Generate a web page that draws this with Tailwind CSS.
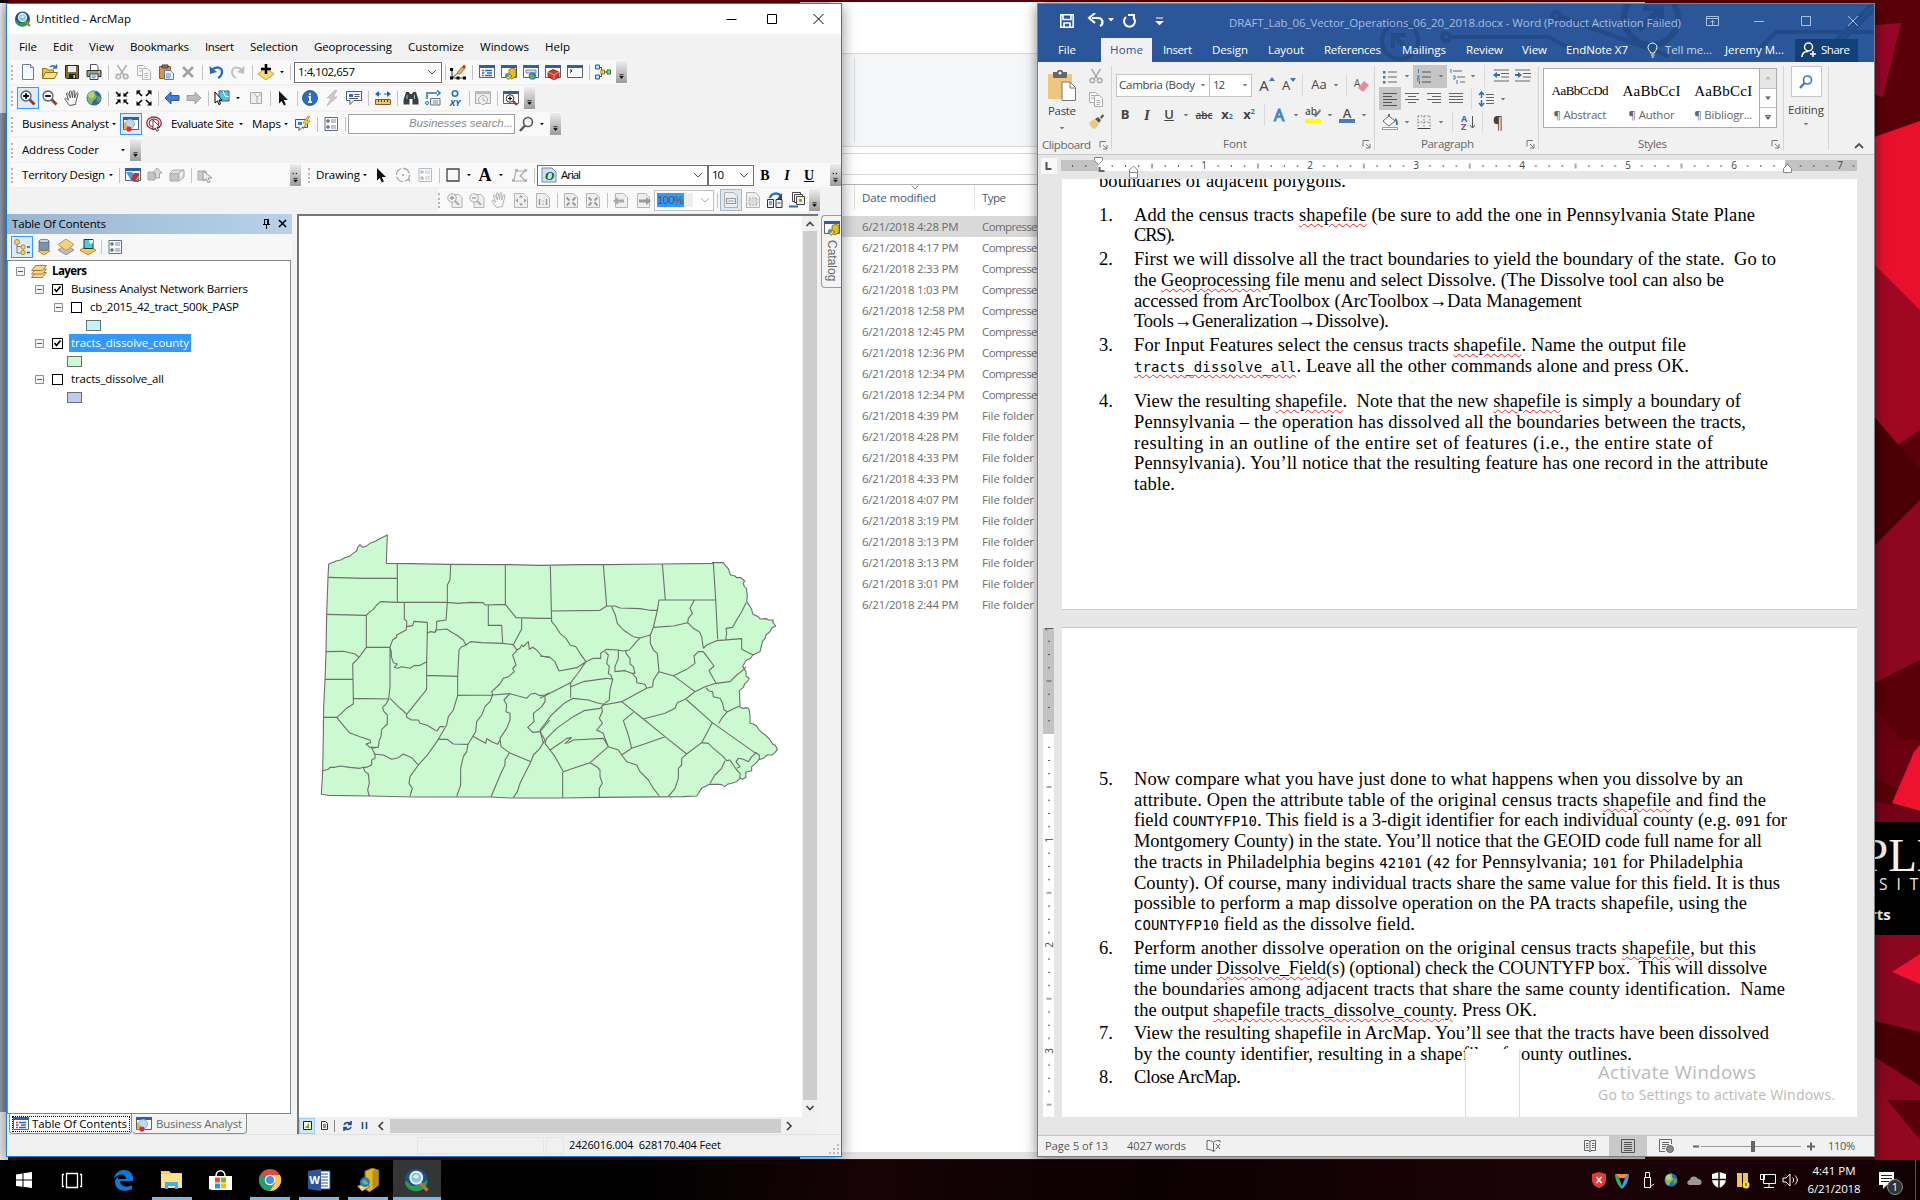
<!DOCTYPE html>
<html lang="en">
<head>
<meta charset="utf-8">
<title>Desktop</title>
<script src="https://cdn.jsdelivr.net/npm/@tailwindcss/browser@4"></script>
</head>
<body class="w-[1920px] h-[1200px] overflow-hidden relative bg-[#5c0008] font-['Open_Sans',sans-serif] text-[11.500px] text-black">

<svg class="hidden">
<defs>
<symbol id="car" viewBox="0 0 16 16"><path d="M5 6.500h6l-3 3.500z" fill="currentColor"/></symbol>
<symbol id="new" viewBox="0 0 16 16"><path d="M2.500.5h8l3 3v12h-11z" fill="#f4f9ff" stroke="#6c7f97"/><path d="M10.500.500v3h3" fill="#cfe0f2" stroke="#6c7f97"/></symbol>
<symbol id="open" viewBox="0 0 16 16"><path d="M.5 14.500v-10h4l1 1.500h6v8.500z" fill="#e6c24e" stroke="#947319"/><path d="M.5 14.500l3-6h12l-3 6z" fill="#ffe48d" stroke="#947319"/><path d="M8 3c2-2 4-1.500 5.500 0M14.500.5v3.500h-3.500" fill="none" stroke="#2c70b4" stroke-width="1.500"/></symbol>
<symbol id="save" viewBox="0 0 16 16"><path d="M1.500 1.500h13v13h-12l-1-1z" fill="#7d6e2e" stroke="#2c2a1a"/><path d="M4 2h8v6H4z" fill="#e9eef5"/><path d="M5 10h7v5H5z" fill="#222"/><path d="M9.500 11h1.500v3H9.500z" fill="#ddd"/></symbol>
<symbol id="print" viewBox="0 0 16 16"><path d="M4.500 6V.5h6l1.500 2V6" fill="#fff" stroke="#555"/><path d="M1 6.500h14v6H1z" fill="#9b9b8c" stroke="#333"/><path d="M4 10h8v5.500H4z" fill="#fff" stroke="#444"/><path d="M5.500 12h5M5.500 13.800h4" stroke="#3d7fc0"/><path d="M12 8h2" stroke="#e8e45a"/></symbol>
<symbol id="cut" viewBox="0 0 16 16"><g fill="none" stroke="currentColor" stroke-width="1.500"><path d="M3.500 1l6 9.500M12.500 1l-6 9.500"/><circle cx="4.300" cy="12.500" r="2.300"/><circle cx="11.700" cy="12.500" r="2.300"/></g></symbol>
<symbol id="copy" viewBox="0 0 16 16"><g fill="#fafafa" stroke="currentColor"><path d="M1.500 1.500h6l2 2v8h-8z"/><path d="M6.500 4.500h5l3 3v8h-8z"/><path d="M3 4.500h3M3 7h3M8.500 9.500h4M8.500 11.500h4M8.500 13.500h3"/></g></symbol>
<symbol id="paste" viewBox="0 0 16 16"><path d="M1.500 2.500h11v12h-11z" fill="#e0913c" stroke="#9c5d1b"/><path d="M4 1h6v3H4z" fill="#777" stroke="#444"/><path d="M6.500 6.500h6l3 3v6h-9z" fill="#eaf3fd" stroke="#5a7da8"/><path d="M8 10h5M8 12h5M8 13.800h4" stroke="#5f8fc8"/></symbol>
<symbol id="del" viewBox="0 0 16 16"><path d="M3 3l10 10M13 3L3 13" stroke="#a2a2a2" stroke-width="2.600"/></symbol>
<symbol id="undo" viewBox="0 0 16 16"><path d="M4 6c4-4 10-3 10 2 0 3-2 5-4 6" fill="none" stroke="currentColor" stroke-width="2.300"/><path d="M1.500 2l.5 8 7-2z" fill="currentColor"/></symbol>
<symbol id="redo" viewBox="0 0 16 16"><path d="M12 6C8 2 2 3 2 8c0 3 2 5 4 6" fill="none" stroke="currentColor" stroke-width="1.800"/><path d="M14.500 2l-.5 8-7-2z" fill="currentColor"/></symbol>
<symbol id="add" viewBox="0 0 16 16"><path d="M8 4l8 6-8 6-8-6z" fill="#ffd87a" stroke="#d9962e"/><path d="M8 0v10M3 5h10" stroke="#000" stroke-width="2.600"/></symbol>
<symbol id="edit" viewBox="0 0 16 16"><path d="M2 5v9h12M2 14l6-5" fill="none" stroke="#333"/><path d="M0 12.500h3v3H0zM6.500 12.500h3v3h-3zM13 12.500h3v3h-3zM0 4h3v3H0z"/><path d="M7 9l5-6 2.500 2-5 5.500z" fill="#f0b64d" stroke="#6b5a38" stroke-width=".7"/><path d="M12 3l2-2.500 2 2L14.500 5z" fill="#c0392b"/></symbol>
<symbol id="wbase" viewBox="0 0 16 16"><path d="M.5 1.500h15v12H.5z" fill="#fdfdfd" stroke="#5c6069"/><path d="M0 1h16v3H0z" fill="#2f5fa8"/></symbol>
<symbol id="wtoc" viewBox="0 0 16 16"><use href="#wbase"/><path d="M3 6.500h2M3 11.500h2" stroke="#e33" stroke-width="1.500"/><path d="M6 6.500h7M8 9h5M6 11.500h7M3 9h2.500" stroke="#2c62c8" stroke-width="1.300"/></symbol>
<symbol id="wcat" viewBox="0 0 16 16"><use href="#wbase"/><path d="M8 6l3-2 4 1.500v7L11 15l-3-2z" fill="#e8bd20" stroke="#7c6206" stroke-width=".8"/><path d="M4 12l4-2 3 2-4 3.500z" fill="#f3d34a" stroke="#7c6206" stroke-width=".8"/><circle cx="6" cy="11" r="2" fill="#3aa0a8"/></symbol>
<symbol id="wsearch" viewBox="0 0 16 16"><use href="#wbase"/><path d="M3 6h10v3H3z" fill="#d9dee5" stroke="#888"/><circle cx="9.500" cy="12" r="3.800" fill="#2b84c6"/><path d="M7 11c2-2 3 0 4 1s-1 3-2 3-2-2-2-4z" fill="#63b44c"/></symbol>
<symbol id="wtool" viewBox="0 0 16 16"><use href="#wbase"/><path d="M3 8l5-2.500 6 2.500v5l-5 3-6-3.500z" fill="#cf3a2c" stroke="#7a1a12" stroke-width=".8"/><path d="M3 8l6 3 5-3M9 11v4.500" fill="none" stroke="#f3b0a6" stroke-width=".8"/></symbol>
<symbol id="wcmd" viewBox="0 0 16 16"><use href="#wbase"/><path d="M3 5.500l2 1.500-2 1.500" fill="none" stroke="#000"/></symbol>
<symbol id="model" viewBox="0 0 16 16"><path d="M4 3.500h2.500v9H4M7 8h6" fill="none" stroke="#444"/><path d="M.5 1h4v4h-4zM.5 11h4v4h-4z" fill="#bfe0ff" stroke="#1d5fa8"/><path d="M6 6h3.500v4H6z" fill="#f6dc53" stroke="#8a7206"/><path d="M12 6h3.500v4H12z" fill="#9adf8e" stroke="#1e7a1e"/></symbol>
<symbol id="zin" viewBox="0 0 16 16"><path d="M9.500 9.500l5 5" stroke="#8a3b2c" stroke-width="2.800"/><circle cx="6" cy="6" r="5" fill="#eef3f8" stroke="#5a6068" stroke-width="1.300"/><path d="M6 3.200v5.600M3.200 6h5.600" stroke="#000" stroke-width="1.800"/></symbol>
<symbol id="zout" viewBox="0 0 16 16"><path d="M9.500 9.500l5 5" stroke="#8a3b2c" stroke-width="2.800"/><circle cx="6" cy="6" r="5" fill="#eef3f8" stroke="#5a6068" stroke-width="1.300"/><path d="M3.200 6h5.600" stroke="#000" stroke-width="1.800"/></symbol>
<symbol id="hand" viewBox="0 0 16 16"><path d="M5.500 15.500L1 9.500c-.5-1.500 1-1.500 2-.5L4.500 10 2.500 4c0-1.500 1.500-1.500 2 0l2 4-1-6c0-1.500 1.700-1.500 2 0l1 5.500.5-6c.2-1.300 1.700-1.200 1.800 0l-.2 6.500 1.700-4.500c.6-1.200 1.900-.7 1.700.5l-2 7.500-.5 3z" fill="#fff" stroke="#555"/></symbol>
<symbol id="globe" viewBox="0 0 16 16"><circle cx="8" cy="8" r="7.500" fill="#2c68b8"/><path d="M2 4c2-3 6-4 7-3s-1 3 1 4 0 4-2 5-1 4-3 4-5-6-3-10z" fill="#8bbb4d"/><path d="M11 6c2 0 4 1 4 3s-3 4-4 3 0-3 0-6z" fill="#6d9d3a"/><circle cx="5.500" cy="5" r="3" fill="#fff" opacity=".35"/></symbol>
<symbol id="fin" viewBox="0 0 16 16"><path d="M2 2l4 4M14 2l-4 4M2 14l4-4M14 14l-4-4" stroke="currentColor" stroke-width="1.600"/><path d="M6.500 2.500v4h-4zM9.500 2.500v4h4zM6.500 13.500v-4h-4zM9.500 13.500v-4h4z" fill="currentColor"/></symbol>
<symbol id="fout" viewBox="0 0 16 16"><path d="M2 2l4 4M14 2l-4 4M2 14l4-4M14 14l-4-4" stroke="currentColor" stroke-width="1.600"/><path d="M.5.500H5L.5 5zM15.500.500H11L15.500 5zM.5 15.500H5L.5 11zM15.500 15.500H11l4.500-4.500z" fill="currentColor"/></symbol>
<symbol id="back" viewBox="0 0 16 16"><path d="M1 8l6-6v3.500h8v5H7V14z" fill="#3f7ede" stroke="#2459ad"/></symbol>
<symbol id="fwd" viewBox="0 0 16 16"><path d="M15 8L9 2v3.500H1v5h8V14z" fill="#bcbcbc" stroke="#a0a0a0"/></symbol>
<symbol id="sel" viewBox="0 0 16 16"><path d="M5 1h10v10H5z" fill="#4cc6e6" stroke="#555"/><path d="M9 1l2 5 4 1" fill="none" stroke="#fff"/><path d="M1 2l7 8H5l1.500 4-1.700.5L3.500 11 1 13z" fill="#fff" stroke="#000"/></symbol>
<symbol id="clr" viewBox="0 0 16 16"><path d="M2.500 2.500h11v11h-11zM6 3l3 4 4-3M9 7v6" fill="#eee" stroke="#aaa"/></symbol>
<symbol id="arrow" viewBox="0 0 16 16"><path d="M4 1l9 9H8.700l2.200 4.500-2 1L6.700 11 4 13.500z" fill="#111"/></symbol>
<symbol id="info" viewBox="0 0 16 16"><circle cx="8" cy="8" r="7.500" fill="#2a6cc6" stroke="#1a4c98" stroke-width=".8"/><path d="M8 3.200v2M6.500 7H8v5M6 12.200h4" stroke="#fff" stroke-width="1.800" fill="none"/></symbol>
<symbol id="bolt" viewBox="0 0 16 16"><path d="M11 0L3 8h4l-4 8 10-9H9l4-7z" fill="#ccc" stroke="#aaa" stroke-width=".6"/></symbol>
<symbol id="pop" viewBox="0 0 16 16"><path d="M.5 1.500h15v9H8l-4 4v-4H.5z" fill="#f4f6f9" stroke="#555"/><path d="M3 4h4v3H3z" fill="#2c6fbf"/><path d="M8.500 4.500h5M8.500 6.500h5M3 8.500h9" stroke="#555"/></symbol>
<symbol id="meas" viewBox="0 0 16 16"><path d="M.5 9.500h15v5H.5z" fill="#f3c36b" stroke="#8b5e18"/><path d="M3.500 10v2M6.500 10v2M9.500 10v2M12.500 10v2" stroke="#5d3d0c"/><path d="M1 4h14" stroke="#1b66b5" stroke-dasharray="5 3"/><path d="M0 4l4-3v6zM16 4l-4-3v6z" fill="#1b66b5"/></symbol>
<symbol id="bino" viewBox="0 0 16 16"><path d="M3 2h3l1 2h2l1-2h3l2.500 8v4.500h-6V9h-3v5.500h-6V10z" fill="#3a3f45"/><path d="M4 5v4M11.500 5v4" stroke="#b8bec6"/></symbol>
<symbol id="path" viewBox="0 0 16 16"><path d="M2 9V3h10M12 .5L15 3l-3 2.500" fill="none" stroke="#2074b8" stroke-width="1.500"/><circle cx="2" cy="13" r="1.500" fill="none" stroke="#2074b8"/><path d="M5.500 8.500h9.500v6.500H5.500z" fill="#e8eef4" stroke="#6b7682"/><path d="M8 11h5M8 13h5" stroke="#8895a3"/></symbol>
<symbol id="xy" viewBox="0 0 16 16"><circle cx="8" cy="3.500" r="2.700" fill="none" stroke="#2074b8" stroke-width="1.600"/><text x="8" y="15.500" text-anchor="middle" font-size="9" font-weight="700" fill="#1d5f9c" font-family="Open Sans">XY</text></symbol>
<symbol id="time" viewBox="0 0 16 16"><path d="M.5 1.500h15v12H.5z" fill="#ececec" stroke="#aaa"/><path d="M0 1h16v3H0z" fill="#bbb"/><circle cx="8" cy="10" r="4.500" fill="#f5f5f5" stroke="#aaa"/><path d="M8 7v3.500h2.500" fill="none" stroke="#aaa"/></symbol>
<symbol id="mag" viewBox="0 0 16 16"><use href="#wbase"/><path d="M9 10l5 5" stroke="#8a3b2c" stroke-width="2.200"/><circle cx="7" cy="8.500" r="3.800" fill="#f6f6f6" stroke="#333"/><path d="M7 6.500v4M5 8.500h4" stroke="#000" stroke-width="1.200"/></symbol>
<symbol id="ba" viewBox="0 0 16 16"><use href="#wbase"/><circle cx="7" cy="8" r="4.500" fill="#bcdcf5" stroke="#7fb2dc"/><path d="M1 6l7 7-4 2-3-3z" fill="#f0a93e"/><circle cx="6" cy="13" r="2.600" fill="#cf2a5a"/></symbol>
<symbol id="ring" viewBox="0 0 16 16"><g fill="none" stroke="#a5304a"><ellipse cx="8" cy="7" rx="7.300" ry="6" stroke-width="1.400"/><ellipse cx="8" cy="7" rx="4.800" ry="3.800" stroke-width="1.200"/></g><path d="M7 4l7 7h-3l1.500 3.500-1.700.7L9.300 12 7 14z" fill="#fff" stroke="#222" stroke-width=".8"/></symbol>
<symbol id="mnote" viewBox="0 0 16 16"><path d="M.5 3.500h12v8H7l-3 3v-3H.5z" fill="#e9f2fb" stroke="#555"/><path d="M3 6h4v3H3z" fill="#2c86c9"/><path d="M13 0L8 7h3l-3 6 7-8h-3l3-5z" fill="#f5d540" stroke="#8b7310" stroke-width=".6"/></symbol>
<symbol id="opt" viewBox="0 0 16 16"><path d="M2 1.500h12.500v13H2z" fill="#fbfcfe" stroke="#5c6f8d"/><circle cx="5" cy="5" r="1.200" fill="none" stroke="#333"/><circle cx="5" cy="11" r="1.200" fill="none" stroke="#333"/><path d="M8 4h5M8 6h5M8 10h5M8 12h5" stroke="#88a"/></symbol>
<symbol id="lens" viewBox="0 0 16 16"><circle cx="10" cy="6" r="4.500" fill="none" stroke="#555" stroke-width="1.600"/><path d="M7 9.500L2 15" stroke="#555" stroke-width="2.400"/></symbol>
<symbol id="terr" viewBox="0 0 16 16"><use href="#wbase"/><path d="M1 5h6l3 4-3 6z" fill="#4a9ad8"/><path d="M9 6h5v3l-5 6-3-3z" fill="#b73247"/><path d="M9 15h5v-5z" fill="#4b8a3a"/></symbol>
<symbol id="gbox" viewBox="0 0 16 16"><path d="M1 5h7v8H1z" fill="#c4c4c4" stroke="#aaa"/><path d="M6 6l4-5 5 5h-2.500v5h-4V6z" fill="#d8d8d8" stroke="#a5a5a5"/></symbol>
<symbol id="gbox2" viewBox="0 0 16 16"><path d="M1 6h9v8H1z" fill="#c4c4c4" stroke="#aaa"/><path d="M1 6l3-3h11l-5 3M10 14l5-4V3" fill="#dedede" stroke="#aaa"/></symbol>
<symbol id="gsel" viewBox="0 0 16 16"><path d="M1 4h8v9H1z" fill="#ccc" stroke="#aaa"/><path d="M6 4l9 7h-4l2 4-2 .8-2-4L6 14z" fill="#eee" stroke="#999"/></symbol>
<symbol id="rot" viewBox="0 0 16 16"><circle cx="8" cy="8" r="6.500" fill="none" stroke="#aaa" stroke-width="1.300" stroke-dasharray="8 2"/><circle cx="8" cy="8" r="1" fill="#999"/><path d="M12 12h3v3z" fill="#aaa"/></symbol>
<symbol id="rect" viewBox="0 0 16 16"><path d="M2 2h12v12H2z" fill="#f7f7fb" stroke="#444" stroke-width="1.300"/></symbol>
<symbol id="poly" viewBox="0 0 16 16"><path d="M2 14l2-10h9l-5 5 6 5z" fill="none" stroke="#aaa" stroke-width="1.200"/><path d="M0 12h3v3H0zM3 2h3v3H3zM12 2h3v3h-3zM12 12h3v3h-3z" fill="#b5b5b5"/></symbol>
<symbol id="page" viewBox="0 0 16 16"><path d="M5 2.500h7l3 3v10H5z" fill="#eee" stroke="#b5b5b5"/></symbol>
<symbol id="pzin" viewBox="0 0 16 16"><use href="#page"/><path d="M8 9l4 4" stroke="#aaa" stroke-width="2"/><circle cx="5" cy="6" r="4.200" fill="#f2f2f2" stroke="#aaa"/><path d="M5 4v4M3 6h4" stroke="#999" stroke-width="1.300"/></symbol>
<symbol id="pzout" viewBox="0 0 16 16"><use href="#page"/><path d="M8 9l4 4" stroke="#aaa" stroke-width="2"/><circle cx="5" cy="6" r="4.200" fill="#f2f2f2" stroke="#aaa"/><path d="M3 6h4" stroke="#999" stroke-width="1.300"/></symbol>
<symbol id="pfull" viewBox="0 0 16 16"><path d="M1.500 1.500h9l4 4v10h-13z" fill="#eee" stroke="#b5b5b5"/><path d="M8 3l2 2.500H6zM8 14l2-2.500H6zM2.500 8.500L5 6.500v4zM13.500 8.500L11 6.500v4z" fill="#999"/></symbol>
<symbol id="p11" viewBox="0 0 16 16"><path d="M1.500 1.500h9l4 4v10h-13z" fill="#eee" stroke="#b5b5b5"/><path d="M4.500 7v6M11.500 7v6M8 8.500v1M8 11.500v1" stroke="#999" stroke-width="1.400"/></symbol>
<symbol id="pgrid" viewBox="0 0 16 16"><path d="M1.500 1.500h9l4 4v10h-13z" fill="#eee" stroke="#b5b5b5"/><path d="M3.500 5.500l3 3M12.500 5.500l-3 3M3.500 13.500l3-3M12.500 13.500l-3-3" stroke="#999" stroke-width="1.800"/></symbol>
<symbol id="pback" viewBox="0 0 16 16"><path d="M2.500 1.500h8l4 4v10h-12z" fill="#eee" stroke="#b5b5b5"/><path d="M0 9l5-4v2.500h6v3H5V13z" fill="#aaa"/></symbol>
<symbol id="pfwd" viewBox="0 0 16 16"><path d="M2.500 1.500h8l4 4v10h-12z" fill="#eee" stroke="#b5b5b5"/><path d="M16 9l-5-4v2.500H4v3h7V13z" fill="#999"/></symbol>
<symbol id="pdraft" viewBox="0 0 16 16"><path d="M1.500.5h9l4 4v11h-13z" fill="#eaeef2" stroke="#b0b0b0"/><path d="M3.500 6.500h9v5h-9zM5.500 9h5" fill="none" stroke="#999" stroke-width="1.200"/></symbol>
<symbol id="pdash" viewBox="0 0 16 16"><path d="M1.500.5h9l4 4v11h-13z" fill="#eee" stroke="#b5b5b5"/><path d="M4 6h8v7H4z" fill="#ddd" stroke="#999" stroke-dasharray="1.500 1.500"/></symbol>
<symbol id="pswap" viewBox="0 0 16 16"><path d="M3 6c1-5 8-6 11-2" fill="none" stroke="#2a6fb0" stroke-width="2.400"/><path d="M15 1v6h-5z" fill="#1d4f87"/><path d="M.5 7.500h6v8h-6zM9 7.500h6v8H9z" fill="#e9eef4" stroke="#333"/><path d="M2 10h3M2 12h3M10.500 11h3" stroke="#555"/></symbol>
<symbol id="pdd" viewBox="0 0 16 16"><path d="M3.500.5h8v9h-8z" fill="#fff" stroke="#444"/><path d="M5.500 2.500h8v8h-8z" fill="#fff" stroke="#444"/><path d="M7.500 4.500h8v8h-8z" fill="#f4f8e8" stroke="#444"/><path d="M10 7h3v3h-3z" fill="#7ba84a"/><path d="M0 13.500h9v2H0z" fill="#2f6fb5"/></symbol>
<symbol id="tlist" viewBox="0 0 16 16"><path d="M3 5v9h5M3 7.500h5" fill="none" stroke="#777"/><circle cx="3" cy="3" r="2.500" fill="#f4cf7e" stroke="#b98b2c"/><circle cx="9" cy="8" r="2.200" fill="#f4cf7e" stroke="#b98b2c"/><circle cx="9" cy="13.500" r="2.200" fill="#f4cf7e" stroke="#b98b2c"/><path d="M13 8h3M13 13.500h3" stroke="#2a5fa0" stroke-width="1.500"/></symbol>
<symbol id="tsrc" viewBox="0 0 16 16"><path d="M8 8l6 4-6 4-6-4z" fill="#f4c559" stroke="#c08a24"/><path d="M3 2v8c0 2 10 2 10 0V2z" fill="#7c92b4" stroke="#4a5a74" stroke-width=".7"/><ellipse cx="8" cy="2" rx="5" ry="1.700" fill="#c8d4e6" stroke="#4a5a74" stroke-width=".7"/></symbol>
<symbol id="tvis" viewBox="0 0 16 16"><path d="M8 5.500l8 5.500-8 5-8-5z" fill="#bdbdbd" stroke="#777" stroke-width=".7"/><path d="M8 0l8 5.500-8 6-8-6z" fill="#f7cf78" stroke="#b98b2c" stroke-width=".8"/></symbol>
<symbol id="tsel" viewBox="0 0 16 16"><path d="M8 6l8 5-8 5-8-5z" fill="#f4c559" stroke="#c08a24"/><path d="M4 .5h9v9H4z" fill="#3fd0ea" stroke="#333"/><path d="M9 1l1 4 3-1V1z" fill="#fff"/></symbol>
<symbol id="layers" viewBox="0 0 16 16"><g fill="#f6d68c" stroke="#9c7433" stroke-width=".9"><path d="M.5 14.500l4-5h11l-4 5z"/><path d="M.5 11l4-5h11l-4 5z"/><path d="M.5 7.500l4-5h11l-4 5z"/></g></symbol>
<symbol id="minus" viewBox="0 0 9 9"><path d="M.5.500h8v8h-8z" fill="#f4f4f4" stroke="#8e8e8e"/><path d="M2 4.500h5" stroke="#3a5b9c"/></symbol>
<symbol id="arcmap" viewBox="0 0 16 16"><circle cx="7.500" cy="8" r="7.500" fill="#1d4f8c"/><path d="M0 9c2-1 3 3 5 3s6-1 10-4c0 6-5 7.500-8 7.500S0 13 0 9z" fill="#2f9a4c"/><path d="M10 10l5 5" stroke="#b5753a" stroke-width="2.200"/><circle cx="7.500" cy="6.500" r="4" fill="#8cc4e4" stroke="#e8f3f8" stroke-width="1.300"/><path d="M5.500 6c1-2 3-2 3.500-.5s-2 2.500-3.500.5z" fill="#dff1f8"/></symbol>
<symbol id="arccat" viewBox="0 0 16 16"><path d="M6 2l5-2 4 1.500v10L9 16l-3-2z" fill="#e5b822" stroke="#80650d" stroke-width=".6"/><path d="M11 1.500v12l4-2v-10z" fill="#b8900f"/><path d="M1 12l6-2 2 2.500-5 3z" fill="#f7dc5c" stroke="#80650d" stroke-width=".6"/><circle cx="6" cy="9.500" r="3.300" fill="#2a7fc0"/><path d="M4 9c2-2 3 0 4 1s-3 2-4-1z" fill="#6cc05a"/></symbol>
<symbol id="launch" viewBox="0 0 16 16"><path d="M5 10.500V4.500h6M8 8l3.500 3.500M12 8v4H8" fill="none" stroke="#777"/></symbol>
<symbol id="cap" viewBox="0 0 16 16"><path d="M5 7.500h6M5.500 10h5L8 13z" fill="#000" stroke="#000"/></symbol>
<symbol id="cap2" viewBox="0 0 16 16"><path d="M4 0l2 1.500L4 3zM8.500 0l2 1.500-2 1.500z"/><path d="M5 8.500h6M5.500 11h5L8 14z" fill="#000" stroke="#000"/></symbol>
</defs>
</svg>

<!-- wallpaper -->
<svg class="absolute left-[1860px] top-0" width="60" height="1200" viewBox="1860 0 60 1200">
<rect x="1860" width="60" height="1200" fill="#5a0008"/>
<path d="M1875 25L1901 23 1883 97 1875 95z" fill="#970628"/>
<path d="M1860 142L1920 121V360L1860 300z" fill="#e8112d"/>
<path d="M1860 250L1920 310V430L1860 470z" fill="#a00822"/>
<path d="M1860 400L1920 470V560L1860 600z" fill="#4a0006"/>
<path d="M1860 560L1920 500V660L1860 690z" fill="#8e0720"/>
<path d="M1860 690L1900 740H1920V800L1860 770z" fill="#6a0010"/>
<path d="M1914 752L1892 803 1920 811V745z" fill="#ee1230"/>
<path d="M1875 801L1920 812V822H1875z" fill="#750019"/>
<path d="M1875 935H1920V1100H1875z" fill="#8b0720"/>
<path d="M1892 972L1920 954V984z" fill="#ef1232"/>
<path d="M1875 1021L1920 1032V1086L1875 1057z" fill="#470003"/>
<path d="M1875 1085L1920 1140V1160H1875z" fill="#93081f"/>
<rect x="1875" y="822" width="45" height="113" fill="#000"/>
<g fill="#f2f2f2"><text x="1862" y="871" font-family="Liberation Serif" font-size="47">PLE</text><text x="1879" y="890" font-size="15.500" font-family="Open Sans" letter-spacing="9">SIT</text><text x="1870" y="920" font-size="15" font-weight="700" font-family="Open Sans">rts</text></g>
</svg>

<!-- windows peeking out on the left -->
<div class="absolute left-0 top-0 w-2 h-[1160px] bg-[#e9e9e9]">
<div class="h-[3px] bg-black"></div><div class="h-[110px] bg-gradient-to-r from-[#f0f0f0] to-[#cfcfcf]"></div><div class="h-[999px] bg-gradient-to-r from-[#9aa0b0] to-[#71768a]"></div>
</div>

<!-- file explorer -->
<section class="absolute left-[800px] top-[2px] w-[845px] h-[1157px] bg-[#e3e3e3]"></section>
<section class="absolute left-[830px] top-[2px] w-[215px] h-[1150px] bg-white overflow-hidden flex flex-col pl-[11px] text-[#6d6d6d]">
<div class="h-[52px] border-b border-[#dadbdc]"></div>
<div class="h-[93px] bg-[#f5f6f7] border-b border-[#dadbdc]"><div class="w-[14px] h-[86px] mt-[3px] border-r border-[#dcdcdc]"></div></div>
<div class="h-[7px] border-b border-[#dadada]"></div>
<div class="h-[21px] border-b border-[#dadada]"></div>
<div class="h-[10px] border-b border-[#b5b5b5]"></div>
<div class="h-[25px] flex items-center text-[#44567a] relative"><svg class="absolute left-[70px] top-0" width="8" height="5"><path d="M.5.500L4 4 7.500.500" fill="none" stroke="#888"/></svg>
<div class="w-[14px] h-full border-r border-[#e0e0e0]"></div><div class="w-[120px] h-full pl-[7px] flex items-center border-r border-[#e0e0e0]"><span data-w="74">Date modified</span></div><span class="pl-[7px]" ><span data-w="24">Type</span></span></div>
<div id="files" class="mt-[6px] flex flex-col"></div>
</section>

<!-- ArcMap -->
<main class="absolute left-[6px] top-[3px] w-[836px] h-[1154px] border border-[#1b80d2] bg-[#f2f2f2] shadow-[0_2px_14px_rgba(0,0,0,.45)] flex flex-col">
<header class="h-[30px] bg-white flex items-center pl-2 pr-[17px]">
<svg class="size-4"><use href="#arcmap"/></svg><span class="ml-[5px]" ><span data-w="95">Untitled - ArcMap</span></span>
<svg class="ml-auto" width="98" height="12" fill="none" stroke="#000"><path d="M.500 6.500h10M41.500 1.500h9v9h-9zM87.500 1l10 10M97.500 1l-10 10"/></svg>
</header>
<nav class="h-[26px] flex items-center gap-4 pl-3">
<span data-w="18">File</span><span data-w="20">Edit</span><span data-w="25">View</span><span data-w="59">Bookmarks</span><span data-w="29">Insert</span><span data-w="48">Selection</span><span data-w="78">Geoprocessing</span><span data-w="56">Customize</span><span data-w="49">Windows</span><span data-w="25">Help</span>
</nav>

<div class="h-[154px] pl-[4px] [&_svg]:size-4 [&_.c]:w-[22px] [&_.c]:h-[22px] [&_.c]:flex [&_.c]:items-center [&_.c]:justify-center [&_.c]:shrink-0 [&_.s]:w-[6px] [&_.s]:h-[15px] [&_.s]:bg-[linear-gradient(#c4c4c4,#c4c4c4)] [&_.s]:bg-[length:1px_100%] [&_.s]:bg-center [&_.s]:bg-no-repeat [&_.s]:shrink-0 [&_.g]:w-[6px] [&_.g]:h-[15px] [&_.g]:border-l-2 [&_.g]:border-dotted [&_.g]:border-[#b5b5b5] [&_.g]:shrink-0 [&_.k]:w-[10px] [&_.k]:flex [&_.k]:justify-center [&_.k]:shrink-0 [&_.e]:w-[11px] [&_.e]:h-[22px] [&_.e]:bg-gradient-to-b [&_.e]:from-[#eee] [&_.e]:to-[#9c9c9c] [&_.e]:flex [&_.e]:items-end [&_.e]:justify-center [&_.e]:shrink-0 [&_.t]:h-[26px] [&_.t]:flex [&_.t]:items-center">
<div class="t -mt-px"><div class="flex items-center bg-[#f9f9f9] h-[24px]">
<i class="g"></i><i class="c"><svg><use href="#new"/></svg></i><i class="c"><svg><use href="#open"/></svg></i><i class="c"><svg><use href="#save"/></svg></i><i class="c"><svg><use href="#print"/></svg></i><i class="s"></i>
<i class="c text-[#b0b0b0]"><svg><use href="#cut"/></svg></i><i class="c text-[#b5b5b5]"><svg><use href="#copy"/></svg></i><i class="c"><svg><use href="#paste"/></svg></i><i class="c"><svg><use href="#del"/></svg></i><i class="s"></i>
<i class="c text-[#2d6cb0]"><svg><use href="#undo"/></svg></i><i class="c text-[#c0c0c0]"><svg><use href="#redo"/></svg></i><i class="s"></i><i class="c"><svg><use href="#add"/></svg></i><i class="k"><svg><use href="#car"/></svg></i><i class="s"></i>
<div class="ml-px w-[148px] h-[21px] bg-white border border-[#707070] flex items-center justify-between pl-[3px]"><span data-w="57">1:4,102,657</span><svg class="mr-px"><path d="M4 6l4 4 4-4" fill="none" stroke="#555"/></svg></div>
<i class="s"></i><i class="c -ml-px"><svg><use href="#edit"/></svg></i><i class="s"></i><i class="c ml-px"><svg><use href="#wtoc"/></svg></i><i class="c"><svg><use href="#wcat"/></svg></i><i class="c"><svg><use href="#wsearch"/></svg></i><i class="c"><svg><use href="#wtool"/></svg></i><i class="c"><svg><use href="#wcmd"/></svg></i><i class="s"></i><i class="c"><svg><use href="#model"/></svg></i><i class="e ml-[2px]"><svg><use href="#cap"/></svg></i>
</div></div>
<div class="t"><div class="flex items-center bg-[#f9f9f9] h-[24px]">
<i class="g"></i><i class="c border border-[#3399ff] bg-[#dcebfa]"><svg><use href="#zin"/></svg></i><i class="c"><svg><use href="#zout"/></svg></i><i class="c"><svg><use href="#hand"/></svg></i><i class="c"><svg><use href="#globe"/></svg></i><i class="s"></i>
<i class="c"><svg><use href="#fin"/></svg></i><i class="c"><svg><use href="#fout"/></svg></i><i class="s"></i><i class="c"><svg><use href="#back"/></svg></i><i class="c"><svg><use href="#fwd"/></svg></i><i class="s"></i><i class="c"><svg><use href="#sel"/></svg></i><i class="k"><svg><use href="#car"/></svg></i><i class="c ml-[2px]"><svg><use href="#clr"/></svg></i><i class="s"></i>
<i class="c -ml-px"><svg><use href="#arrow"/></svg></i><i class="s"></i><i class="c -ml-px"><svg><use href="#info"/></svg></i><i class="c"><svg><use href="#bolt"/></svg></i><i class="c"><svg><use href="#pop"/></svg></i><i class="s"></i><i class="c ml-px"><svg><use href="#meas"/></svg></i><i class="s"></i><i class="c"><svg><use href="#bino"/></svg></i><i class="c"><svg><use href="#path"/></svg></i><i class="c"><svg><use href="#xy"/></svg></i><i class="s"></i><i class="c"><svg><use href="#time"/></svg></i><i class="s"></i><i class="c"><svg><use href="#mag"/></svg></i><i class="e ml-[2px]"><svg><use href="#cap"/></svg></i>
</div></div>
<div class="t"><div class="flex items-center bg-[#f9f9f9] h-[24px]">
<i class="g"></i><span class="ml-[5px]"><span data-w="87">Business Analyst</span></span><i class="k"><svg><use href="#car"/></svg></i><i class="c ml-px border border-[#3399ff] bg-[#dcebfa]"><svg><use href="#ba"/></svg></i><i class="c ml-px"><svg><use href="#ring"/></svg></i>
<span class="ml-[6px]"><span data-w="63">Evaluate Site</span></span><i class="k ml-[2px]"><svg><use href="#car"/></svg></i><span class="ml-[6px]"><span data-w="29">Maps</span></span><i class="k"><svg><use href="#car"/></svg></i><i class="c ml-px"><svg><use href="#mnote"/></svg></i><i class="s"></i><i class="c"><svg><use href="#opt"/></svg></i><i class="s"></i>
<div class="w-[167px] h-[20px] bg-white border border-[#a0a0a0] flex items-center justify-end pr-px text-[#8c8c8c] font-['Liberation_Sans',sans-serif] italic"><span data-w="104">Businesses search...</span></div><i class="c"><svg><use href="#lens"/></svg></i><i class="k"><svg><use href="#car"/></svg></i><i class="e ml-[3px]"><svg><use href="#cap"/></svg></i>
</div></div>
<div class="t"><div class="flex items-center bg-[#f9f9f9] h-[24px]">
<i class="g"></i><span class="ml-[5px]"><span data-w="77">Address Coder</span></span><i class="k ml-[19px]"><svg><use href="#car"/></svg></i><i class="e ml-[2px]"><svg><use href="#cap"/></svg></i></div></div>
<div class="t -mt-px"><div class="flex items-center bg-[#f9f9f9] h-[24px] w-full">
<i class="g"></i><span class="ml-[5px]"><span data-w="83">Territory Design</span></span><i class="k ml-px"><svg><use href="#car"/></svg></i><i class="s"></i><i class="c"><svg><use href="#terr"/></svg></i><i class="c"><svg><use href="#gbox"/></svg></i><i class="c"><svg><use href="#gbox2"/></svg></i><i class="s"></i><i class="c"><svg><use href="#gsel"/></svg></i><i class="e ml-[74px]"><svg><use href="#cap2"/></svg></i>
<i class="g ml-[7px]"></i><span class="ml-[2px]"><span data-w="44">Drawing</span></span><i class="k"><svg><use href="#car"/></svg></i><i class="c"><svg><use href="#arrow"/></svg></i><i class="c"><svg><use href="#rot"/></svg></i><i class="c"><svg><use href="#opt" opacity=".45"/></svg></i><i class="s"></i><i class="c"><svg><use href="#rect"/></svg></i><i class="k"><svg><use href="#car"/></svg></i>
<i class="c not-italic font-['Liberation_Serif',serif] font-bold text-[18px]">A</i><i class="k"><svg><use href="#car"/></svg></i><i class="c ml-[3px]"><svg><use href="#poly"/></svg></i><i class="s"></i>
<div class="w-[171px] h-[21px] bg-white border border-[#707070] flex items-center pl-[3px]"><svg><path d="M1 1h10l4 4v10H1z" fill="#cfe0f5" stroke="#6a8cc0"/><text x="4" y="13" font-size="13" font-style="italic" font-weight="700" fill="#0a6a1a" font-family="Liberation Serif">O</text></svg><span class="ml-1"><span data-w="20">Arial</span></span><svg class="ml-auto mr-px"><path d="M4 6l4 4 4-4" fill="none" stroke="#555"/></svg></div>
<div class="w-[46px] h-[21px] bg-white border border-[#707070] flex items-center pl-[3px]"><span data-w="12">10</span><svg class="ml-auto mr-px"><path d="M4 6l4 4 4-4" fill="none" stroke="#555"/></svg></div>
<i class="c not-italic font-['Liberation_Serif',serif] font-bold text-[14px]">B</i><i class="c font-['Liberation_Serif',serif] font-bold text-[14px]">I</i><i class="c not-italic underline font-['Liberation_Serif',serif] font-bold text-[14px]">U</i><i class="e ml-auto"><svg><use href="#cap2"/></svg></i>
</div></div>
<div class="t pl-[427px] -mt-px"><div class="flex items-center bg-[#f9f9f9] h-[24px]">
<i class="g"></i><i class="c"><svg><use href="#pzin"/></svg></i><i class="c"><svg><use href="#pzout"/></svg></i><i class="c"><svg><use href="#hand" opacity=".45"/></svg></i><i class="c"><svg><use href="#pfull"/></svg></i><i class="c"><svg><use href="#p11"/></svg></i><i class="s"></i><i class="c"><svg><use href="#pgrid"/></svg></i><i class="c"><svg><use href="#pgrid"/></svg></i><i class="s"></i><i class="c"><svg><use href="#pback"/></svg></i><i class="c"><svg><use href="#pfwd"/></svg></i>
<div class="w-[60px] h-[21px] border border-[#c0c0c0] bg-white flex items-center pl-[2px] font-['Liberation_Sans',sans-serif] text-[#555]"><span class="bg-[#3399ff] leading-[14px]"><span data-w="27">100%</span></span><span class="w-[9px] h-[14px] bg-[#eee]"></span><svg class="ml-auto"><path d="M4 6l4 4 4-4" fill="none" stroke="#aaa"/></svg></div><i class="s"></i>
<i class="c border border-[#a9b6c2] bg-[#dfe8f1]"><svg><use href="#pdraft"/></svg></i><i class="c"><svg><use href="#pdash"/></svg></i><i class="c"><svg><use href="#pswap"/></svg></i><i class="c"><svg><use href="#pdd"/></svg></i><i class="e ml-px"><svg><use href="#cap"/></svg></i>
</div></div>
</div>

<div class="h-[920px] flex">
<!-- table of contents -->
<aside class="w-[285px] flex flex-col shrink-0">
<div class="h-5 bg-gradient-to-r from-[#99b4d1] to-[#b9d1ea] flex items-center pl-[5px] pr-[4px]"><span data-w="94">Table Of Contents</span>
<svg class="ml-auto" width="26" height="12" fill="none" stroke="#000"><path d="M2.500 1v5.500M2.500 1.500h4M5.500 1v5.500M6.500 1v5.500M1 6.500h7M4.500 7v4"/><path d="M17 2l7 7M24 2l-7 7" stroke-width="1.700"/></svg></div>
<div class="h-[26px] flex items-center pl-[4px] bg-[#f7f7f7] [&_svg]:size-4">
<i class="w-[22px] h-[22px] border border-[#3399ff] bg-[#dcebfa] flex items-center justify-center"><svg><use href="#tlist"/></svg></i><svg class="ml-[3px]"><use href="#tsrc"/></svg><svg class="ml-[6px]"><use href="#tvis"/></svg><svg class="ml-[6px]"><use href="#tsel"/></svg><i class="w-px h-[14px] bg-[#c4c4c4] ml-[5px]"></i><svg class="ml-[5px]"><use href="#opt"/></svg></div>
<div class="h-[854px] w-[284px] bg-white border border-[#828790] flex flex-col pt-px [&>div]:h-[18px] [&>div]:flex [&>div]:items-center [&_.m]:size-[9px] [&_.x]:size-[11px] [&_.x]:border [&_.x]:border-black [&_.x]:bg-white [&_.x]:ml-2 [&_.x]:shrink-0">
<div class="pl-[8px] font-bold"><svg class="m"><use href="#minus"/></svg><svg class="size-4 ml-[6px] mr-[5px]"><use href="#layers"/></svg><span data-w="35">Layers</span></div>
<div class="pl-[27px]"><svg class="m"><use href="#minus"/></svg><svg class="x" viewBox="0 0 9 9"><path d="M1.500 4l2 2.500L7.500 1.500" fill="none" stroke="#000" stroke-width="1.700"/></svg><span class="ml-2"><span data-w="177">Business Analyst Network Barriers</span></span></div>
<div class="pl-[46px]"><svg class="m"><use href="#minus"/></svg><i class="x"></i><span class="ml-2"><span data-w="149">cb_2015_42_tract_500k_PASP</span></span></div>
<div class="pl-[78px]"><i class="w-[15px] h-[11px] border border-[#6e6e6e] bg-[#bef5f7]"></i></div>
<div class="pl-[27px]"><svg class="m"><use href="#minus"/></svg><svg class="x" viewBox="0 0 9 9"><path d="M1.500 4l2 2.500L7.500 1.500" fill="none" stroke="#000" stroke-width="1.700"/></svg><span class="ml-[6px] h-[18px] w-[122px] pl-[2px] bg-[#3399ff] text-white flex items-center"><span data-w="118">tracts_dissolve_county</span></span></div>
<div class="pl-[59px]"><i class="w-[15px] h-[11px] border border-[#6e6e6e] bg-[#cbf9d0]"></i></div>
<div class="pl-[27px]"><svg class="m"><use href="#minus"/></svg><i class="x"></i><span class="ml-2"><span data-w="93">tracts_dissolve_all</span></span></div>
<div class="pl-[59px]"><i class="w-[15px] h-[11px] border border-[#6e6e6e] bg-[#bccaf4]"></i></div>
</div>
<div class="flex h-[20px] pl-[2px] [&_svg]:size-4">
<div class="w-[123px] h-[20px] border border-t-0 border-[#8a8a8a] rounded-b bg-white flex items-center pl-[2px]"><span class="border border-dotted border-black flex items-center h-[16px] w-[118px]"><svg><use href="#wtoc"/></svg><span class="ml-[3px]"><span data-w="95">Table Of Contents</span></span></span></div>
<div class="w-[115px] h-[20px] border border-t-0 border-l-0 border-[#8a8a8a] rounded-b flex items-center pl-1 text-[#6a6a6a]"><svg><use href="#ba"/></svg><span class="ml-1"><span data-w="86">Business Analyst</span></span></div>
</div>
</aside>
<!-- data view -->
<div class="ml-[5px] w-[521px] border-l-2 border-t-2 border-[#767676] flex flex-col">
<div class="h-[901px] flex bg-white">
<svg class="shrink-0" width="503" height="901" viewBox="299 216 503 901">
<g transform="translate(310 520) scale(.33333)" stroke="#6e6e6e" stroke-width="3.300" fill="none" stroke-linejoin="round">
<path fill="#cbf9d0" d="M56 132L70 127 78 123 92 120 105 113 118 109 128 101 140 93 143 82 150 74 158 82 168 79 180 70 196 64 212 55 232 45 229 130 300 131 420 133 565 134 600 134 690 136 804 134 880 134 1055 132 1208 130V128L1240 128 1246 137 1256 147 1258 156 1262 165 1275 168 1280 173 1292 173 1304 183 1300 190 1303 200 1310 205V215L1312 225 1310 245 1318 256 1325 268 1328 282 1345 290 1350 297 1370 296 1375 300 1390 300 1388 306 1397 318 1385 325 1380 335 1368 345 1365 355 1357 365 1355 375 1350 395 1340 400 1328 405 1322 415 1310 420 1302 432 1298 440 1308 455V468L1318 475 1312 485 1305 490 1300 502 1288 512 1289 530 1290 562 1298 565 1312 563 1317 567 1320 585V610L1330 612 1340 618 1346 628 1358 640 1366 645 1380 660 1388 672 1396 676 1402 688 1395 698 1385 705 1372 705 1360 715 1345 720 1340 728 1325 740 1325 752 1307 757 1308 772 1298 778 1290 775 1280 785 1265 790 1252 793 1244 800 1235 794 1225 793 1198 793 1190 797 1175 805 1168 815 1160 828 1120 830 870 832 760 834 600 834 540 831 310 831 180 828 54 826 34 823 38 755 40 640 41 560 45 480 48 395 50 283 54 172z"/>
<path d="M55 172L162 175H262M262 130V247M422 134L420 180 412 195V247M586 136V253M50 283L169 286 180 275 190 268 200 255 212 245 262 247H412L445 250 480 247 520 248 525 255 586 253M169 286V382M283 247V298L290 303V320M290 320L308 317 312 304 352 307V340M352 340L360 335 375 337 380 325V304L408 300 412 247M535 254V316H575L578 370M586 253L618 293 690 295M635 296V327L610 374M169 382H240M169 382L147 412 128 432 130 535M48 395L100 394 120 398 135 402 147 412M45 478H128M130 535L236 537M130 535V552L112 563 80 593M41 592H80L118 638 150 650 180 660 182 668 168 672 180 682 205 682M240 382V500L236 537M290 320L288 330 270 340 260 345V352L248 360 243 372 240 382 244 395V410L250 428 262 432 253 442 262 445 275 440 300 445 312 437 330 436 350 425M352 340L350 425V508L290 583M350 466L443 469M443 526V469L447 390 455 380 468 375 482 365 515 368 578 370 610 374 620 390 630 385 635 375 640 380 655 365 658 388 668 382 680 390 695 408 720 412M375 337L380 330 410 327 425 337 440 345 460 360 468 375M443 526L548 525 600 521 625 528 650 535 662 522 675 520 690 527 705 525 718 518M240 535L250 545 265 560 280 573 290 583 290 592 305 600 325 600 330 610 350 615 375 630 382 632 390 620 403 620M443 526L430 570 415 590 410 615 385 658 370 680 350 708 325 735 300 770 297 790 307 805 300 828M236 537L230 550 218 562 222 575 232 585V612L215 628 213 650 208 660 205 682 185 685 195 702 195 715 185 720 185 735 170 742 160 742 150 745 120 742 90 738 75 742 60 742 55 748 38 752M160 742L165 755 175 762 178 790 173 810 178 828M190 702L220 705 245 718 265 713 280 702 305 713 325 735M385 658L412 658 430 672 474 673M548 525L540 545 525 560 515 585 500 605 497 635 474 673 470 695 460 710 452 745 452 795 440 830M487 648L527 670 530 656 545 665 563 673 570 660M548 525L545 515 570 492 580 475 595 470 613 455 608 445 618 435 608 405 620 392M600 521L582 540 590 555 588 575 600 580 600 600 590 625 570 655 573 680 598 698 663 725M598 698L585 720 585 735 575 755 543 830M663 725L650 750 630 790 622 815 610 833M663 725L670 705 690 685 705 660 690 635 668 637 653 622 672 605 670 580 695 560 705 545 705 527M690 635L720 600"/>
</g>
<g transform="translate(540 520) scale(.33333)" stroke="#6e6e6e" stroke-width="3.300" fill="none" stroke-linejoin="round">
<path d="M31 138L34 272 35 305 48 320 60 340 78 355 90 375 108 380 120 400 138 425M0 295H34M34 273L180 271 200 258 225 258 240 264 300 266 330 271H352M190 134L200 258M367 132L376 240M520 128L527 238 533 358M376 240H527M376 240L357 240 352 271 340 322 331 345M215 260L226 285 232 310 250 330 280 350 300 354 331 345 331 370 340 390 352 400 357 455M340 322L400 318 443 308 445 295 457 280 450 265 463 240M443 308L460 325 478 335 485 350 490 385M300 354L285 370 268 390 248 393 235 390 200 388 182 400V415L160 415 138 425 110 443 57 453 45 425 30 412 0 408M138 425L110 465 92 488 0 535M92 488V533M0 630L20 605 30 590 50 570 75 548 100 535 145 540 170 548 190 553 208 540 210 510 218 478 200 475 130 485 92 500M218 478L212 465 205 460 208 440 200 430 205 405 195 395M235 390L235 415 225 440 225 455 255 452 275 460 285 460 280 440 270 432 270 415 258 400 258 392M278 462L290 475 290 488 315 493 320 505 338 500 340 480 357 455 400 467 440 448 465 430 462 408 475 395 490 395M190 555L245 545 320 505M490 385L500 375 530 362 605 356V388L640 405M490 395L505 415 522 438 507 452 528 490M400 467L465 515 495 500 528 490 570 485 590 465 612 448 618 440M245 545L310 597 375 580 405 565 412 548 437 537 465 515M310 597L375 650 440 702 485 668 517 608M437 537L517 608 640 695 658 705V720M498 503L505 512 518 515 520 530 540 535 548 550 552 570 562 575 598 558M562 575L545 595 537 610M280 577L250 602 265 645 275 685 320 670 375 650M275 685L245 705M190 555L180 565 132 572 100 590 50 625 20 655 15 670 30 690 45 710 70 755 100 745 150 728 205 680 190 655 100 660 85 668 75 670 95 653 80 655 60 670 30 690M185 560L187 575 178 595 187 610 170 630 190 640 195 655 205 680 235 690 245 705 260 725 290 735 300 755 325 780 340 805 358 828M68 757V833M150 728L170 740 180 750 180 770 187 790 178 805V833M0 630L10 670M440 702L425 715 425 735 415 745 415 775 405 805 385 830M485 668L505 670 520 685 550 710 560 722 570 720 590 750 600 760 600 775M555 722L545 745 525 765 510 790M590 745L600 740 588 725 595 715 610 718 625 725 635 710 650 697M618 248L605 275 590 300 578 322 558 325 560 340 557 358"/>
</g>
</svg>
<div class="w-[16px] bg-[#f0f0f0] flex flex-col items-center"><svg width="16" height="15" class="shrink-0"><path d="M4.500 10L8 6.500 11.500 10" fill="none" stroke="#444" stroke-width="1.600"/></svg><div class="flex-1 w-[14px] bg-[#cdcdcd]"></div><svg width="16" height="17" class="shrink-0"><path d="M4.500 6L8 9.500 11.500 6" fill="none" stroke="#444" stroke-width="1.600"/></svg></div>
</div>
<div class="h-[17px] flex items-center bg-[#f0f0f0] text-[#1f4f8c]">
<i class="w-[16px] h-[16px] bg-[#cde6fa] border border-[#9ccbf2] flex items-center justify-center"><svg width="9" height="9"><path d="M.5.500h8v8h-8z" fill="#eef6d8" stroke="#222"/><path d="M2 7l4-5v5z" fill="#7ca23c"/></svg></i>
<svg class="ml-[5px]" width="54" height="14" fill="none" stroke="currentColor"><path d="M1.500 2.500h4l2 2v6h-6zM3 6h3M3 8h3" stroke="#333"/><path d="M14.500 1v12" stroke="#888"/><path d="M24 6c1-3 5-3 7-1M31 2v3.500h-3M31 8c-1 3-5 3-7 1M24 12V8.500h3M42.500 3v7M46.500 3v7" stroke-width="1.600"/></svg>
<svg width="14" height="14"><path d="M9 3L5 7l4 4" fill="none" stroke="#333" stroke-width="1.500"/></svg>
<div class="ml-[2px] w-[391px] h-[14px] bg-[#cdcdcd]"></div><svg width="16" height="14"><path d="M6 3l4 4-4 4" fill="none" stroke="#333" stroke-width="1.500"/></svg>
</div>
</div>
<div class="ml-[3px] w-[20px] h-[73px] mt-px border border-r-0 border-[#9a9a9a] rounded-l bg-[#f4f4f4] flex flex-col items-center pt-1"><svg class="size-4 shrink-0"><use href="#wcat"/></svg><span class="[writing-mode:vertical-rl] mt-1 text-[#666] font-['Liberation_Sans',sans-serif] text-[12px] leading-4">Catalog</span></div>
</div>
<footer class="flex-1 flex items-center bg-[#f0f0f0] border-t border-[#e2e2e2]"><i class="ml-[410px] w-[127px] h-[17px] border border-[#e5e5e5]"></i><i class="w-[18px] h-[17px] ml-[2px] border border-[#e5e5e5]"></i><span class="ml-[5px] text-[11px]"><span data-w="152">2426016.004  628170.404 Feet</span></span><svg class="ml-auto self-end" width="14" height="14" fill="#bbb"><path d="M10 2h2v2h-2zM10 6h2v2h-2zM10 10h2v2h-2zM6 6h2v2H6zM6 10h2v2H6zM2 10h2v2H2z"/></svg></footer>
</main>

<!-- Word -->
<section class="absolute left-[1037px] top-[3px] w-[838px] h-[1154px] border border-[#808080] bg-[#e6e6e6] shadow-[0_2px_12px_rgba(0,0,0,.5)] flex flex-col text-[#444]">
<header class="h-[58px] bg-[#2b579a] text-white relative flex flex-col">
<svg class="absolute right-0 top-0" width="500" height="58" fill="none" stroke="#234b88" stroke-width="4"><circle cx="26" cy="37" r="18"/><path d="M19 44V31H32M19 31l14 14M74 33h100l35 18M185 12l110 40M440 58l60-60M455 50l48-48M380 50l22-22h98"/><circle cx="72" cy="33" r="4"/><circle cx="182" cy="12" r="4"/><circle cx="277" cy="14" r="27" stroke-width="6"/><path d="M265 26l22-22M269 4h18v18" stroke-width="6"/></svg>
<div class="h-[34px] relative flex items-center">
<svg class="ml-[21px]" width="105" height="16" fill="none" stroke="#fff" stroke-width="1.600"><path d="M1.800 1.800h12.400v12.400H1.800zM4 2v4.500h8V2M5 14v-4h6v4"/><path d="M33 5h6c5 0 6 6 2 8" stroke-width="2.200"/><path d="M36 0l-6 5 6 5" stroke-width="2"/><path d="M49 5h6l-3 3.500z" fill="#fff" stroke="none"/><path d="M67 4a5.500 5.500 0 1 0 7 0M69 2h6v5" stroke-width="2"/><path d="M97 5h7M97.500 8.500h6l-3 3z" fill="#fff" stroke-width="1.200"/></svg>
<span class="ml-[65px] mt-1 text-[#a3bde3]"><span data-w="452">DRAFT_Lab_06_Vector_Operations_06_20_2018.docx - Word (Product Activation Failed)</span></span>
<svg class="ml-[24px]" width="154" height="14" fill="none" stroke="#a9bfe0"><path d="M1.500 2.500h12v9h-12zM1.500 4.500h12M7.500 11V6.500M5.500 8.500l2-2 2 2M49 7.500h10M96.500 2.500h9v9h-9zM143 2l10 10M153 2l-10 10"/></svg>
</div>
<nav class="h-6 relative flex items-center [&>span]:shrink-0">
<span class="ml-5"><span data-w="18">File</span></span><span class="ml-[25px] w-[51px] h-6 bg-[#f1f1f1] text-[#2b579a] flex items-center justify-center"><span data-w="33">Home</span></span>
<span class="ml-[11px]"><span data-w="29">Insert</span></span><span class="ml-5"><span data-w="36">Design</span></span><span class="ml-5"><span data-w="36">Layout</span></span><span class="ml-5"><span data-w="57">References</span></span><span class="ml-[21px]"><span data-w="44">Mailings</span></span><span class="ml-5"><span data-w="37">Review</span></span><span class="ml-[19px]"><span data-w="25">View</span></span><span class="ml-[19px]"><span data-w="62">EndNote X7</span></span>
<svg class="ml-[19px]" width="12" height="16" fill="none" stroke="#fff"><path d="M3.500 11c0-2-2.500-3-2.500-5.500a4.500 4.500 0 0 1 9 0C10 8 7.500 9 7.500 11zM4 13h3.500M4.500 15h2.500"/></svg><span class="ml-[6px] text-[#c5d5ee]"><span data-w="47">Tell me...</span></span><span class="ml-[13px]"><span data-w="59">Jeremy M...</span></span>
<span class="ml-[11px] w-[63px] h-[23px] bg-[#124078] flex items-center pl-[6px]"><svg width="16" height="16" fill="none" stroke="#fff" stroke-width="1.500"><circle cx="7.500" cy="5" r="4"/><path d="M1 15c0-4 3-5.500 6-5.500M12 9v6M9 12h6"/></svg><span class="ml-[4px]"><span data-w="29">Share</span></span></span>
</nav>
</header>

<div class="h-[93px] shrink-0 bg-[#f1f1f1] border-b border-[#c8c8c8] flex [&_.c]:w-[22px] [&_.c]:flex [&_.c]:items-center [&_.c]:justify-center [&_.c]:shrink-0 [&_.c]:not-italic [&_.k]:w-3 [&_.k]:flex [&_.k]:justify-center [&_.k]:shrink-0 [&_.k]:text-[#777] [&_svg]:size-4 [&_.s]:w-px [&_.s]:h-[22px] [&_.s]:bg-[#dadada] [&_.s]:shrink-0 [&_.gr]:border-r [&_.gr]:border-[#d5d5d5] [&_.gr]:my-1 [&_.gr]:flex [&_.gr]:flex-col [&_.gr]:shrink-0 [&_.r]:flex [&_.r]:items-center [&_.lb]:mt-auto [&_.lb]:-mb-[2px] [&_.lb]:h-[17px] [&_.lb]:flex [&_.lb]:items-center [&_.lb]:justify-between [&_.lb]:text-[#666]">
<div class="gr w-[74px]">
<div class="flex"><div class="flex flex-col items-center w-[48px] pt-[4px]"><svg class="!w-[28px] !h-[31px]" viewBox="0 0 28 31"><path d="M0 4h24v25H0z" fill="#eec67d"/><path d="M5 2h4c0-3 6-3 6 0h4v6H5z" fill="#666"/><circle cx="12" cy="3" r="1.500" fill="#f1f1f1"/><path d="M14 12h8l5.500 5.500V30.500H14z" fill="#fff" stroke="#777"/><path d="M22 12v6h5.500" fill="none" stroke="#777"/></svg><span class="leading-[20px]"><span data-w="28">Paste</span></span><i class="k -mt-px"><svg><use href="#car"/></svg></i></div>
<div class="flex flex-col gap-[7px] pt-[2px] pl-[2px] text-[#aaa]"><svg><use href="#cut"/></svg><svg><use href="#copy"/></svg><svg><path d="M1 9l5-4 5 5-4 5c-2 0-5-3-6-6z" fill="#eec67d"/><path d="M7 5l3-2 3 3-2 3zM12 3l3-3 1 2-2.500 3z" fill="#555"/></svg></div></div>
<div class="lb pl-[4px]"><span data-w="49">Clipboard</span><svg><use href="#launch"/></svg></div>
</div>
<div class="gr w-[263px]">
<div class="r mt-[7px] h-6 pl-[4px]"><div class="w-[94px] h-[23px] bg-white border border-[#c3c3c3] flex items-center justify-between pl-[2px]"><span data-w="76">Cambria (Body</span><i class="k"><svg><use href="#car"/></svg></i></div><div class="w-[43px] -ml-px h-[23px] bg-white border border-[#c3c3c3] flex items-center justify-between pl-[3px]"><span data-w="12">12</span><i class="k"><svg><use href="#car"/></svg></i></div>
<i class="c ml-[4px] text-[15px]">A<svg class="!size-[6px] mb-3" viewBox="0 0 6 6"><path d="M0 5l3-4 3 4z" fill="#3b78b5"/></svg></i><i class="c text-[13px] pt-[2px]">A<svg class="!size-[6px] mb-3" viewBox="0 0 6 6"><path d="M0 1l3 4 3-4z" fill="#3b78b5"/></svg></i><i class="s ml-[2px]"></i><i class="c ml-[5px] text-[13px]">Aa</i><i class="k"><svg><use href="#car"/></svg></i><i class="s ml-[4px]"></i>
<i class="c ml-[4px]"><svg><text x="0" y="10" font-size="10" fill="#555" font-family="Open Sans">A</text><path d="M4 11l6-7 5 4-6 7z" fill="#ea8a9c"/></svg></i></div>
<div class="r mt-[6px] h-6 pl-[2px] text-[13px]"><i class="c font-bold">B</i><i class="c !italic font-['Liberation_Serif',serif] font-bold text-[15px]">I</i><i class="c underline font-semibold">U</i><i class="k"><svg><use href="#car"/></svg></i><i class="c line-through text-[10px] font-semibold !w-6">abc</i><i class="c font-bold text-[13px]">x<sub class="text-[7px] text-[#2f6fb0]">2</sub></i><i class="c font-bold text-[13px]">x<sup class="text-[7px] text-[#2f6fb0]">2</sup></i><i class="s ml-[4px]"></i>
<i class="c ml-[3px]"><svg><text x="8" y="14" text-anchor="middle" font-size="16" fill="#fff" stroke="#4a86c5" stroke-width="1.200" font-family="Open Sans">A</text></svg></i><i class="k"><svg><use href="#car"/></svg></i><i class="c"><svg><text x="0" y="8" font-size="10" font-weight="600" fill="#555" font-family="Open Sans">ab</text><path d="M9 9l6-7 1 2-5 6z" fill="#777"/><path d="M0 12h16v4H0z" fill="#ff0"/></svg></i><i class="k"><svg><use href="#car"/></svg></i><i class="c"><svg><text x="8" y="11" text-anchor="middle" font-size="13" font-weight="600" fill="#555" font-family="Open Sans">A</text><path d="M0 12h16v4H0z" fill="#4a7ebb"/></svg></i><i class="k"><svg><use href="#car"/></svg></i></div>
<div class="lb"><span class="ml-[111px]"><span data-w="24">Font</span></span><svg><use href="#launch"/></svg></div>
</div>
<div class="gr w-[164px]">
<div class="r h-[22px] pl-[4px] -mt-px"><i class="c"><svg><path d="M6 4h9M6 9h9M6 14h9" stroke="#666"/><path d="M1 3h2.500v2.500H1zM1 8h2.500v2.500H1zM1 13h2.500v2.500H1z" fill="#3b78b5"/></svg></i><i class="k"><svg><use href="#car"/></svg></i><span class="flex bg-[#c5c5c5] h-[23px] items-center"><i class="c"><svg><path d="M6 4h9M6 9h9M6 14h9" stroke="#555"/><path d="M2.500 1v4M1 8h2.500L1 11h3M1 13h2.500v3" fill="none" stroke="#3b78b5"/></svg></i><i class="k"><svg><use href="#car"/></svg></i></span><i class="c !w-5"><svg><path d="M4 3h9M8 9h8M11 14h5" stroke="#666"/><path d="M2 1v4M4 8h2v3H4M8 12v4" fill="none" stroke="#3b78b5"/></svg></i><i class="k"><svg><use href="#car"/></svg></i><i class="s ml-[5px]"></i><i class="c ml-[5px]"><svg><path d="M1 2h15M8 5.500h8M8 9h8M1 13h15" stroke="#666"/><path d="M0 7l4-3v2h3v2H4v2z" fill="#2f6fb0"/></svg></i><i class="c"><svg><path d="M0 2h15M8 5.500h8M8 9h8M0 13h15" stroke="#666"/><path d="M7 7L3 4v2H0v2h3v2z" fill="#2f6fb0"/></svg></i></div>
<div class="r h-[23px] pl-[4px]"><i class="c bg-[#c5c5c5] h-[23px]"><svg><path d="M1 2.500h14M1 5.500h9M1 8.500h14M1 11.500h9M1 14.500h14" stroke="#555"/></svg></i><i class="c"><svg><path d="M1 2.500h14M4 5.500h8M1 8.500h14M4 11.500h8" stroke="#666"/></svg></i><i class="c"><svg><path d="M1 2.500h14M6 5.500h9M1 8.500h14M6 11.500h9" stroke="#666"/></svg></i><i class="c"><svg><path d="M1 2.500h14M1 5.500h14M1 8.500h14M1 11.500h14" stroke="#666"/></svg></i><i class="s ml-1"></i><i class="c ml-[3px]"><svg><path d="M8 3.500h8M8 6.500h8M8 9.500h8M8 12.500h8" stroke="#666"/><path d="M3.500 2v5M3.500 9v5M1 4l2.500-3L6 4M1 12l2.500 3L6 12" fill="none" stroke="#2f6fb0" stroke-width="1.500"/></svg></i><i class="k"><svg><use href="#car"/></svg></i></div>
<div class="r h-[23px] pl-[4px]"><i class="c"><svg><path d="M1 7l6-5 6 5-6 5z" fill="#fff" stroke="#666"/><path d="M7 2V0M13 5c2 1 2 4 2 6" stroke="#3b78b5" stroke-width="2" fill="none"/><path d="M.5 13.500h15v2H.5z" fill="#fff" stroke="#999"/></svg></i><i class="k"><svg><use href="#car"/></svg></i><i class="c"><svg><path d="M2 2h12v12M2 2v12M8 2v12M2 8h12" fill="none" stroke="#777" stroke-dasharray="1.500 1.500"/><path d="M1.500 14.500h13" stroke="#444"/></svg></i><i class="k"><svg><use href="#car"/></svg></i><i class="s ml-[5px]"></i><i class="c ml-[4px]"><svg><text x="1" y="8" font-size="9" font-weight="700" fill="#2f6fb0" font-family="Open Sans">A</text><text x="1" y="16" font-size="9" font-weight="700" fill="#8e4bb0" font-family="Open Sans">Z</text><path d="M12.500 2v12M10 11l2.500 3 2.500-3" fill="none" stroke="#555"/></svg></i><i class="s ml-[3px]"></i><i class="c ml-[4px] text-[16px]">¶</i></div>
<div class="lb"><span class="ml-[46px]"><span data-w="53">Paragraph</span></span><svg><use href="#launch"/></svg></div>
</div>
<div class="gr w-[245px]">
<div class="mt-[2px] ml-1 w-[234px] h-[60px] bg-white border border-[#ababab] flex">
<div class="grid grid-cols-3 w-[217px] text-center"><div class="flex flex-col items-center pt-[10px]"><span class="font-['Liberation_Serif',serif] text-black text-[13px] leading-6"><span data-w="57">AaBbCcDd</span></span><span class="leading-6 text-[#666]"><span data-w="53">¶ Abstract</span></span></div><div class="flex flex-col items-center pt-[10px]"><span class="font-['Liberation_Serif',serif] text-black text-[15px] leading-6"><span data-w="58">AaBbCcI</span></span><span class="leading-6 text-[#666]"><span data-w="46">¶ Author</span></span></div><div class="flex flex-col items-center pt-[10px]"><span class="font-['Liberation_Serif',serif] text-black text-[15px] leading-6"><span data-w="58">AaBbCcI</span></span><span class="leading-6 text-[#666]"><span data-w="58">¶ Bibliogr...</span></span></div></div>
<div class="flex-1 border-l border-[#ababab] flex flex-col [&>i]:flex-1 [&>i]:flex [&>i]:items-center [&>i]:justify-center text-[#666]"><i class="bg-[#e6e6e6] text-[#bbb]"><svg class="rotate-180"><use href="#car"/></svg></i><i class="border-y border-[#c3c3c3]"><svg><use href="#car"/></svg></i><i><svg><path d="M5 5.500h6" stroke="#666"/><use href="#car"/></svg></i></div></div>
<div class="lb"><span class="ml-[99px]"><span data-w="29">Styles</span></span><svg><use href="#launch"/></svg></div>
</div>
<div class="gr w-[45px] items-center"><div class="w-[31px] h-[31px] bg-[#fdfdfd] border border-[#c6c6c6] flex items-center justify-center shrink-0"><svg><circle cx="9.500" cy="6" r="4" fill="none" stroke="#3b78b5" stroke-width="1.600"/><path d="M6.500 9L2 14" stroke="#3b78b5" stroke-width="2.200"/></svg></div><span class="mt-[4px]"><span data-w="36">Editing</span></span><i class="k -mt-[2px]"><svg><use href="#car"/></svg></i></div>
<svg class="self-end ml-[22px]"><path d="M4 10l4-4 4 4" fill="none" stroke="#555" stroke-width="1.800"/></svg>
</div>

<svg class="shrink-0" width="836" height="24" viewBox="1038 155 836 24" font-family="Open Sans" font-size="10" fill="#444" text-anchor="middle">
<defs><pattern id="tick" patternUnits="userSpaceOnUse" x="1099" y="160" width="105.900" height="12"><path d="M13.200 5v2M26.500 5v2M39.700 5v2M53 3.500v5M66.200 5v2M79.400 5v2M92.700 5v2" stroke="#555"/></pattern></defs>
<rect x="1038" y="155" width="836" height="24" fill="#e6e6e6"/><path d="M1041 158h16v16h-16z" fill="#f8f8f8"/><path d="M1046.500 162v7h5" fill="none" stroke="#555" stroke-width="2"/>
<path d="M1061 160h37v11h-37zM1785 160h72v11h-72z" fill="#c3c3c3"/><path d="M1098 160h687v11h-687z" fill="#fff"/><rect x="1061" y="160" width="796" height="12" fill="url(#tick)"/>
<text x="1204" y="169">1</text><text x="1310" y="169">2</text><text x="1416" y="169">3</text><text x="1522" y="169">4</text><text x="1628" y="169">5</text><text x="1734" y="169">6</text><text x="1840" y="169">7</text>
<g fill="#fff" stroke="#888"><path d="M1094.500 157.500h8v3l-4 4-4-4zM1129.500 178v-8l4-4 4 4v8zM1129.500 172.500h8M1783.500 172.500v-4l4-4 4 4v4z"/></g><path d="M1099.500 167v4h5" fill="none" stroke="#666" stroke-width="2"/>
</svg>

<div class="h-[956px] overflow-hidden flex shrink-0 font-['Liberation_Serif',serif] text-black text-[18.500px]">
<svg class="shrink-0" width="24" height="956" viewBox="1038 179 24 956" font-family="Open Sans" font-size="10" fill="#444" text-anchor="middle">
<defs><pattern id="vt" patternUnits="userSpaceOnUse" x="1043" y="734" width="12" height="105.900"><path d="M5 13.200h2M5 26.500h2M5 39.700h2M3.500 53h5M5 66.200h2M5 79.400h2M5 92.700h2" stroke="#555"/></pattern></defs>
<path d="M1043 628h11v106h-11z" fill="#c3c3c3"/><path d="M1043 734h11v383h-11z" fill="#fff"/><rect x="1043" y="628" width="12" height="489" fill="url(#vt)"/>
<text transform="translate(1053 629) rotate(-90)">1</text><text transform="translate(1053 840) rotate(-90)">1</text><text transform="translate(1053 945) rotate(-90)">2</text><text transform="translate(1053 1051) rotate(-90)">3</text></svg>
<div class="w-[795px] flex flex-col [&_.li]:flex [&_.li]:leading-[20.700px] [&_.n]:w-[35px] [&_.n]:shrink-0 [&_.b]:whitespace-pre [&_u]:decoration-wavy [&_u]:decoration-[#e22] [&_u]:decoration-[1px] [&_u]:underline-offset-[2px] [&_code]:font-['DejaVu_Sans_Mono',monospace] [&_code]:text-[14px] [&_code]:leading-[0]">
<div class="h-[431px] bg-white border-b border-[#c8c8c8] pl-[37px] shrink-0 overflow-hidden">
<div class="li -mt-[8px]"><div class="b"><span data-w="247">boundaries of adjacent polygons.</span></div></div>
<div class="li mt-[13px]"><div class="n">1.</div><div class="b"><span data-w="621">Add the census tracts <u>shapefile</u> (be sure to add the one in Pennsylvania State Plane</span><br><span data-w="41">CRS).</span></div></div>
<div class="li mt-[3px]"><div class="n">2.</div><div class="b"><span data-w="642">First we will dissolve all the tract boundaries to yield the boundary of the state.  Go to</span><br><span data-w="590">the <u>Geoprocessing</u> file menu and select Dissolve. (The Dissolve tool can also be</span><br><span data-w="448">accessed from ArcToolbox (ArcToolbox→Data Management</span><br><span data-w="255">Tools→Generalization→Dissolve).</span></div></div>
<div class="li mt-[3px]"><div class="n">3.</div><div class="b"><span data-w="552">For Input Features select the census tracts <u>shapefile</u>. Name the output file</span><br><span data-w="555"><u><code>tracts_dissolve_all</code></u>. Leave all the other commands alone and press OK.</span></div></div>
<div class="li mt-[15px]"><div class="n">4.</div><div class="b"><span data-w="607">View the resulting <u>shapefile</u>.  Note that the new <u>shapefile</u> is simply a boundary of</span><br><span data-w="612">Pennsylvania – the operation has dissolved all the boundaries between the tracts,</span><br><span data-w="579">resulting in an outline of the entire set of features (i.e., the entire state of</span><br><span data-w="634">Pennsylvania). You’ll notice that the resulting feature has one record in the attribute</span><br><span data-w="41">table.</span></div></div>
</div>
<div class="mt-[17px] h-[490px] bg-white border-t border-[#c8c8c8] pl-[37px] pt-[141px] shrink-0 relative">
<div class="li"><div class="n">5.</div><div class="b"><span data-w="609">Now compare what you have just done to what happens when you dissolve by an</span><br><span data-w="632">attribute. Open the attribute table of the original census tracts <u>shapefile</u> and find the</span><br><span data-w="653">field <code>COUNTYFP10</code>. This field is a 3-digit identifier for each individual county (e.g. <code>091</code> for</span><br><span data-w="628">Montgomery County) in the state. You’ll notice that the GEOID code full name for all</span><br><span data-w="609">the tracts in Philadelphia begins <code>42101</code> (<code>42</code> for Pennsylvania; <code>101</code> for Philadelphia</span><br><span data-w="646">County). Of course, many individual tracts share the same value for this field. It is thus</span><br><span data-w="613">possible to perform a map dissolve operation on the PA tracts shapefile, using the</span><br><span data-w="281"><code>COUNTYFP10</code> field as the dissolve field.</span></div></div>
<div class="li mt-[3px]"><div class="n">6.</div><div class="b"><span data-w="622">Perform another dissolve operation on the original census tracts <u>shapefile</u>, but this</span><br><span data-w="633">time under <u>Dissolve_Field</u>(s) (optional) check the COUNTYFP box.  This will dissolve</span><br><span data-w="651">the boundaries among adjacent tracts that share the same county identification.  Name</span><br><span data-w="403">the output <u>shapefile tracts_dissolve_county</u>. Press OK.</span></div></div>
<div class="li mt-[3px]"><div class="n">7.</div><div class="b"><span data-w="635">View the resulting shapefile in ArcMap. You’ll see that the tracts have been dissolved</span><br><span data-w="498">by the county identifier, resulting in a shapefile of county outlines.</span></div></div>
<div class="li mt-[2px]"><div class="n">8.</div><div class="b"><span data-w="107">Close ArcMap.</span></div></div>
<div class="absolute left-[403px] top-[421px] w-[55px] h-[68px] bg-white border-x border-[#dcdcdc]"></div>
<div class="absolute left-[536px] top-[432px] font-['Open_Sans',sans-serif] text-[#b9b9b9] flex flex-col"><span class="text-[18.500px] leading-6"><span data-w="158">Activate Windows</span></span><span class="text-[14px] leading-[22px]"><span data-w="237">Go to Settings to activate Windows.</span></span></div>
</div>
</div>
</div>

<footer class="flex-1 bg-[#f1f1f1] border-t border-[#c6c6c6] flex items-center pl-[7px] text-[#555]">
<span class="text-[11px]"><span data-w="63">Page 5 of 13</span></span><span class="ml-[19px] text-[11px]"><span data-w="59">4027 words</span></span>
<svg class="ml-5" width="16" height="14" fill="none" stroke="#666"><path d="M7.500 12.500c-2-2-4-2-6.500-2v-9c2.500 0 4.500 0 6.500 2v9l2-1.500M7.500 3.500c2-2 3-2 6.500-2v2M10 5l4 5M14 5l-4 5"/></svg>
<svg class="ml-[361px]" width="14" height="14" fill="none" stroke="#666"><path d="M7 2v11M1.500 1.500H6L7 3l1-1.500h4.500v10H8L7 13l-1-1.500H1.500zM3 4.500h2.500M3 6.500h2.500M3 8.500h2.500M9 4.500h2.500M9 6.500h2.500M9 8.500h2.500"/></svg>
<i class="ml-3 w-[38px] h-full bg-[#c9c9c9] flex items-center justify-center"><svg width="14" height="14" fill="none" stroke="#555"><path d="M.5.500h13v13H.500zM3 3.500h8M3 5.500h8M3 7.500h8M3 9.500h8M3 11.500h8"/></svg></i>
<svg class="ml-3" width="16" height="14" fill="none" stroke="#666"><path d="M12.500 5V.500h-12v12H6M3 3.500h7M3 5.500h7M3 7.500h4M3 9.500h3"/><circle cx="11" cy="10" r="3.500" fill="#888"/></svg>
<svg class="ml-4" width="126" height="14" stroke="#666" fill="none"><path d="M2 7.500h6M116 7.500h8M120 3.500v8" stroke-width="2"/><path d="M10 7.500h100" stroke="#999"/><path d="M60 2h4v11h-4z" fill="#666" stroke="none"/></svg>
<span class="ml-[11px] text-[11px]"><span data-w="27">110%</span></span>
</footer>
</section>

<!-- taskbar -->
<footer class="absolute left-0 top-[1160px] w-[1920px] h-10 bg-[linear-gradient(100deg,#000_0,#000_33%,#160306_45%,#0b0002_60%,#1c0307_80%,#120104_100%)] flex items-center text-white">
<svg width="441" height="40" viewBox="0 0 441 40" class="shrink-0">
<rect x="393" width="48" height="40" fill="#333637"/>
<path d="M152 37h40v3h-40zM250 37h40v3h-40zM299 37h40v3h-40zM348 37h40v3h-40zM393 37h48v3h-48z" fill="#76b9ed"/>
<path d="M16 14.500l6.500-1v6H16zM23.500 13.300L32 12v7.500h-8.500zM16 20.500h6.500v6.300L16 26zM23.500 20.500H32V28l-8.500-1.200z" fill="#fff"/>
<path d="M66.500 13.500h11v14h-11zM64 14.500h-1.500v12H64M80 14.500h1.500v12H80" fill="none" stroke="#fff" stroke-width="1.300"/>
<path d="M114 19c1-7 6-9 10-9 6 0 10 4 9 11h-13c0 6 8 7 12 4v4c-8 4-17 1-17-7 0-3 2-5 5-6-2 1-2 2-2 3h8c0-6-8-6-12 0z" fill="#0e78d4"/>
<path d="M161 11h8l2 2h11v15h-21z" fill="#f8cf66"/><path d="M161 14h21v14h-21z" fill="#fbe08e"/><path d="M165 29v-7h13v7h-3v-3h-7v3z" fill="#3fb0e8"/>
<path d="M209 16h23v14h-20l-3-1z" fill="#fff"/><path d="M216 16c0-7 9-7 9 0" fill="none" stroke="#fff" stroke-width="1.500"/><path d="M215 17.500h5v5h-5z" fill="#f25022"/><path d="M221 17.500h5v5h-5z" fill="#7fba00"/><path d="M215 23.500h5v5h-5z" fill="#00a4ef"/><path d="M221 23.500h5v5h-5z" fill="#ffb900"/>
<circle cx="270" cy="20" r="11" fill="#dd4b3e"/><path d="M270 20l-9.500-5.500A11 11 0 0 0 270 31l5-8z" fill="#1da462"/><path d="M270 15h10a11 11 0 0 1-10 16l5-8z" fill="#ffcd46"/><circle cx="270" cy="20" r="5.200" fill="#fff"/><circle cx="270" cy="20" r="4" fill="#4a8af4"/>
<path d="M318 11h12v18h-12z" fill="#fff" stroke="#2b579a"/><path d="M320 14h8M320 17h8M320 20h8M320 23h8M320 26h8" stroke="#2b579a"/><path d="M308 11l13-2v22l-13-2z" fill="#2b579a"/><text x="314.500" y="24" text-anchor="middle" font-size="11" font-weight="700" fill="#fff" font-family="Open Sans">W</text>
<svg x="356" y="8" width="24" height="24"><use href="#arccat"/></svg><svg x="405" y="8" width="24" height="24"><use href="#arcmap"/></svg>
</svg>
<svg class="ml-[1144px] shrink-0" width="215" height="40" viewBox="1585 0 215 40" fill="none" stroke="#fff">
<path d="M1599 12l7 2v6c0 5-4 7-7 8-3-1-7-3-7-8v-6z" fill="#e33b3b" stroke="none"/><path d="M1596.500 17l5 6M1601.500 17l-5 6" stroke-width="1.500"/>
<g stroke="none"><path d="M1615 14h14l-4 4h-6z" fill="#f08a3c"/><path d="M1615 14l4 4 3 8v3c-4-3-7-9-7-15z" fill="#2fae5f"/><path d="M1629 14l-4 4-3 8v3c4-3 7-9 7-15z" fill="#3b9be8"/></g>
<path d="M1644.500 17.500h6v10h-6zM1645.500 12.500h4v5h-4zM1650 27l4-3"/>
<svg x="1664" y="13" width="14" height="14" stroke="none"><use href="#globe"/></svg>
<path d="M1690 25c-4 0-3-5 0-5 0-4 6-5 8-1 4-1 5 6 1 6z" fill="#999" stroke="none"/>
<path d="M1719 12l7 2v5c0 5-4 8-7 9-3-1-7-4-7-9v-5z" fill="#fff" stroke="none"/><path d="M1719 12v16M1712 19.500h14" stroke="#111" stroke-width="1.500"/>
<path d="M1737 13h5v14h-5zM1743 13h5v14h-5z" fill="#f0c356" stroke="none"/><circle cx="1746" cy="25" r="3.500" fill="#f7e02c" stroke="none"/><path d="M1746 23v3" stroke="#222"/>
<path d="M1763.500 14.500h12v9h-12zM1760.500 14.500h4v5h-4zM1769 24v3M1764 27.500h10" fill="#0b0002"/>
<path d="M1783 18h3l4-4v12l-4-4h-3zM1792.500 17.500c1.500 1.500 1.500 3.500 0 5M1795 15.500c3 3 3 6 0 9"/>
</svg>
<div class="w-[64px] ml-[2px] text-center leading-[18px] flex flex-col items-center shrink-0"><span data-w="43">4:41 PM</span><span data-w="53">6/21/2018</span></div>
<svg class="ml-[10px]" width="44" height="40" viewBox="0 0 44 40"><path d="M3 12h15v13H11l-4 4v-4H3z" fill="#fff"/><path d="M5 15.500h11M5 18.500h11M5 21.500h8" stroke="#222"/><circle cx="19" cy="27" r="7.500" fill="#333" stroke="#888"/><text x="19" y="31" font-size="11" text-anchor="middle" fill="#fff" font-family="Open Sans">1</text><path d="M39.500 0v40" stroke="#555"/></svg>
</footer>

<script>
const files = ['4:28','4:17','2:33','1:03','12:58','12:45','12:36','12:34','12:34','4:39','4:28','4:33','4:33','4:07','3:19','3:13','3:13','3:01','2:44'];
document.getElementById('files').innerHTML = files.map((t, i) =>
  `<div class="h-[21px] flex items-center whitespace-nowrap pl-[21px] ${i ? '' : 'bg-[#d9d9d9]'}"><span class="w-[120px]"><span data-w="${t.length > 4 ? 102.5 : 96.5}">6/21/2018 ${t} PM</span></span><span data-w="${i < 9 ? 62 : 52}">${i < 9 ? 'Compressed' : 'File folder'}</span></div>`).join('');

// Spread or tighten each label so it occupies its designed width.
function fit() {
  document.querySelectorAll('[data-w]').forEach(el => {
    const s = el.style, target = +el.dataset.w;
    s.whiteSpace = 'pre';
    s.display = 'inline-block';
    s.flexShrink = 0;
    s.width = 'auto';
    s.letterSpacing = '0px';
    const natural = el.getBoundingClientRect().width;
    s.letterSpacing = (target - natural) / Math.max(1, el.textContent.length - 1) + 'px';
    s.width = target + 'px';
  });
}
fit();
addEventListener('load', fit);
document.fonts.ready.then(fit);
requestAnimationFrame(() => requestAnimationFrame(fit));
[0, 30, 100, 250, 500].forEach(t => setTimeout(fit, t));
new MutationObserver(fit).observe(document.head, { childList: true, subtree: true });
</script>
</body>
</html>
